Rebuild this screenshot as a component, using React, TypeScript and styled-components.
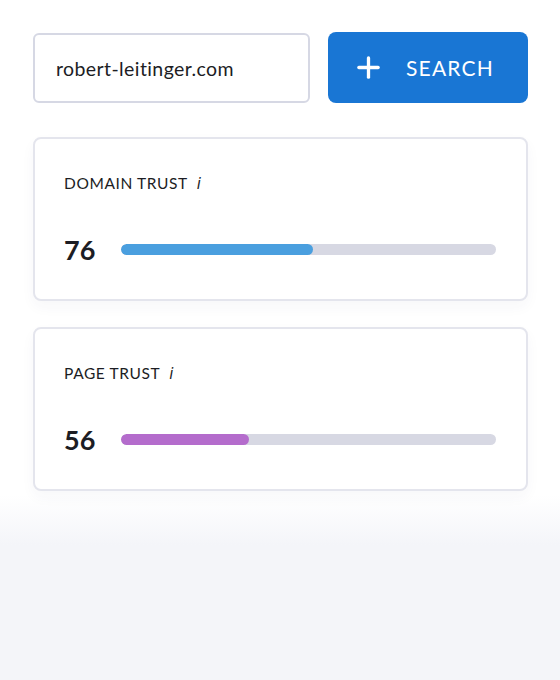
import styled, { createGlobalStyle } from "styled-components";
import { LuPlus } from "react-icons/lu";

const GlobalStyle = createGlobalStyle`
  html, body {
    margin: 0;
    padding: 0;
    height: 100%;
  }
  body {
    font-family: Lato, "Noto Sans", sans-serif;
    background: linear-gradient(to bottom, #ffffff 0, #ffffff 495px, #f4f5f9 545px, #f4f5f9 100%);
    min-height: 680px;
    color: #1c1d24;
  }
`;

type Metric = {
  label: string;
  value: number;
  percent: number;
  color: string;
};

const metrics: Metric[] = [
  { label: "DOMAIN TRUST", value: 76, percent: 51.2, color: "#4a9fdf" },
  { label: "PAGE TRUST", value: 56, percent: 34, color: "#b46ccc" },
];

export default function App() {
  return (
    <>
      <GlobalStyle />
      <Page>
        <SearchRow>
          <DomainInput defaultValue="robert-leitinger.com" />
          <SearchButton type="button">
            <PlusIcon />
            SEARCH
          </SearchButton>
        </SearchRow>
        {metrics.map((m) => (
          <Card key={m.label}>
            <Label>
              {m.label}
              <Info>i</Info>
            </Label>
            <ValueRow>
              <Value>{m.value}</Value>
              <Track>
                <Fill style={{ width: `${m.percent}%`, background: m.color }} />
              </Track>
            </ValueRow>
          </Card>
        ))}
      </Page>
    </>
  );
}

const Page = styled.div`
  padding: 32px 32px 0 33px;
  display: flex;
  flex-direction: column;
  width: 495px;
`;

const SearchRow = styled.div`
  display: flex;
  gap: 18px;
  align-items: center;
  margin-bottom: 34px;
`;

const DomainInput = styled.input`
  box-sizing: border-box;
  width: 277px;
  height: 70px;
  margin-top: 1px;
  border: 2px solid #d6d8e4;
  border-radius: 6px;
  padding: 0 21px;
  font-family: Lato, "Noto Sans", sans-serif;
  font-size: 19.5px;
  letter-spacing: 0.4px;
  color: #1c1d24;
  outline: none;
  background: #fff;
`;

const SearchButton = styled.button`
  box-sizing: border-box;
  flex: 1;
  height: 71px;
  border: none;
  border-radius: 8px;
  background: #1976d4;
  color: #fff;
  font-family: Lato, "Noto Sans", sans-serif;
  font-size: 21px;
  letter-spacing: 1.2px;
  display: flex;
  align-items: center;
  justify-content: center;
  gap: 21px;
  padding: 0 10px 0 0;
  cursor: pointer;
`;

const PlusIcon = styled(LuPlus)`
  font-size: 33px;
  stroke-width: 2.4;
`;

const Card = styled.div`
  box-sizing: border-box;
  height: 164px;
  border: 2px solid #e4e5ed;
  border-radius: 8px;
  background: #fff;
  padding: 35px 30px 0 29px;
  margin-bottom: 26px;
  box-shadow: 0 6px 14px rgba(40, 50, 90, 0.04);
`;

const Label = styled.div`
  font-size: 15.5px;
  letter-spacing: 0.6px;
  color: #1c1d24;
  display: flex;
  align-items: baseline;
  gap: 9px;
  height: 22px;
`;

const Info = styled.span`
  font-style: italic;
  font-family: "DejaVu Sans", sans-serif;
  font-size: 15px;
`;

const ValueRow = styled.div`
  display: flex;
  align-items: center;
  margin-top: 37px;
`;

const Value = styled.div`
  font-size: 27px;
  font-weight: 700;
  width: 57px;
  color: #1c1d24;
`;

const Track = styled.div`
  flex: 1;
  height: 11px;
  border-radius: 6px;
  background: #d7d8e3;
  overflow: hidden;
`;

const Fill = styled.div`
  height: 100%;
  border-radius: 6px;
`;
